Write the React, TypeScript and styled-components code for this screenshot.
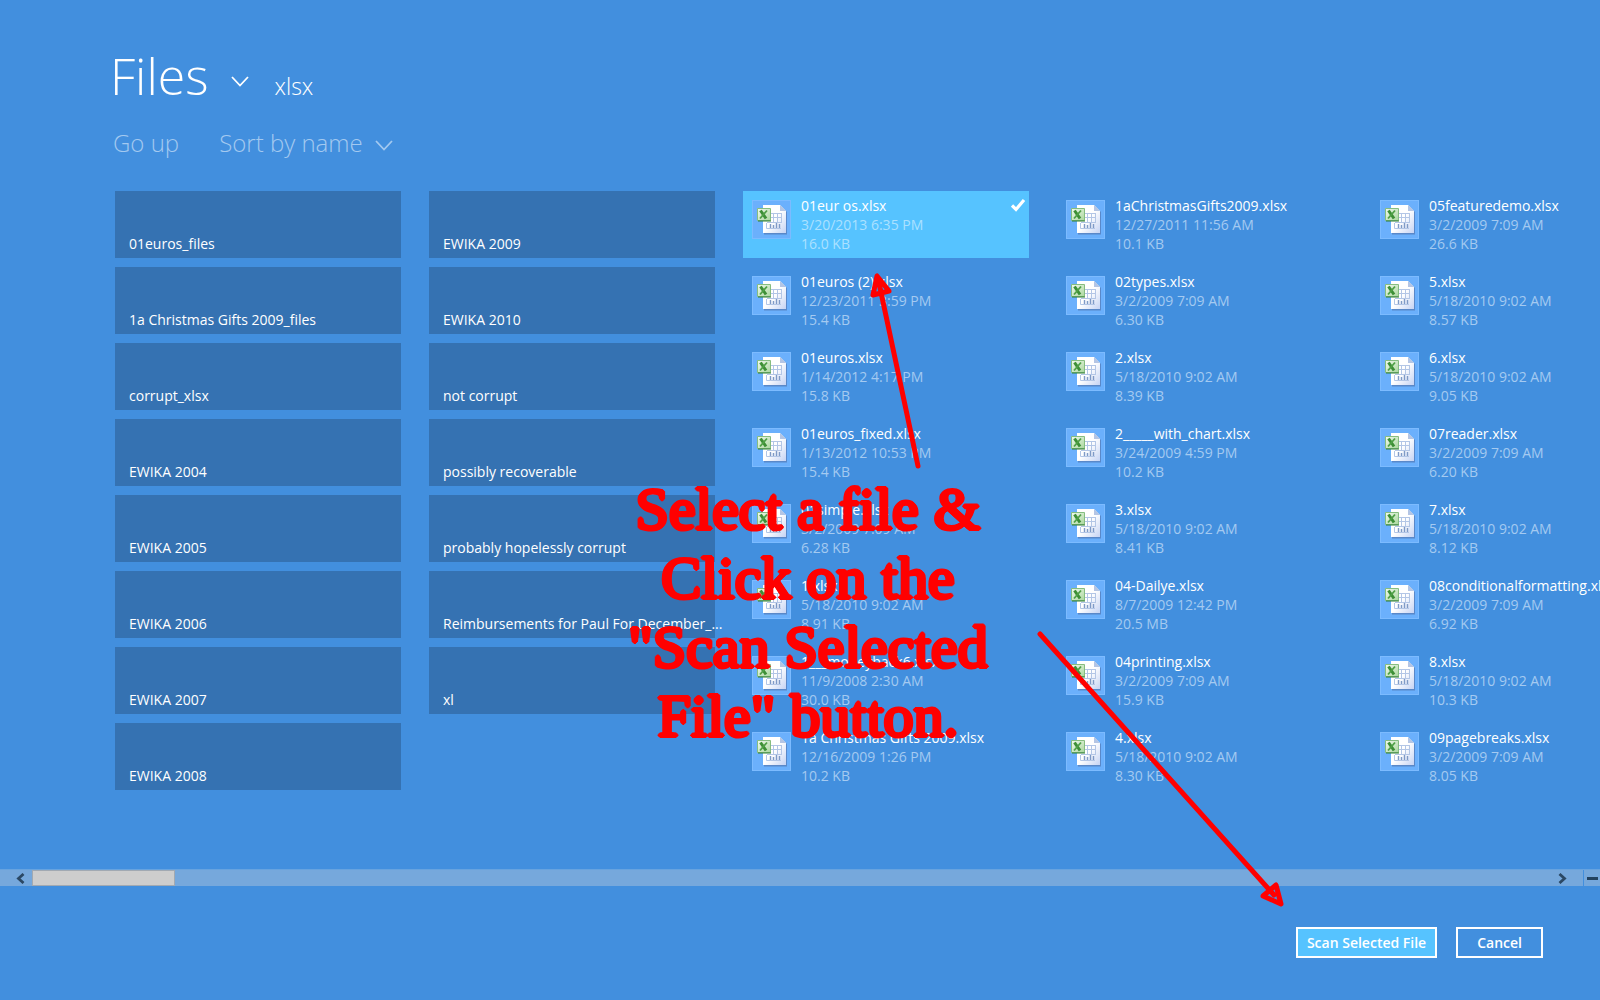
import React from 'react';
import styled, { createGlobalStyle } from 'styled-components';

const GlobalStyle = createGlobalStyle`
  * { box-sizing: border-box; }
  body {
    margin: 0;
    background: #428fde;
    color: #fff;
    font-family: "Open Sans", "Noto Sans", sans-serif;
    overflow: hidden;
  }
  button { font-family: inherit; color: inherit; cursor: pointer; }
`;

const Page = styled.div`
  position: relative;
  display: flex;
  flex-direction: column;
  min-height: 100vh;
  overflow: hidden;
`;

const Header = styled.header`
  display: flex;
  align-items: baseline;
  height: 64px;
  margin: 44px 0 0 110px;
`;

const LocationButton = styled.button`
  display: flex;
  align-items: center;
  gap: 22px;
  padding: 0;
  border: 0;
  background: none;
  svg { margin-top: 10px; }
`;

const Title = styled.h1`
  margin: 0;
  font-size: 50px;
  line-height: 64px;
  font-weight: 300;
`;

const Crumb = styled.span`
  margin-left: 26px;
  font-size: 23px;
  line-height: 32px;
  font-weight: 300;
`;

const Commands = styled.nav`
  display: flex;
  gap: 40px;
  margin: 18px 0 0 113px;
`;

const Command = styled.button`
  display: flex;
  align-items: center;
  gap: 12px;
  padding: 0;
  border: 0;
  background: none;
  font-size: 24px;
  line-height: 34px;
  font-weight: 300;
  && { color: #a3c9f0; }
  svg { margin-top: 4px; }
`;

const Browser = styled.main`
  flex: 1;
  padding: 31px 0 0 115px;
  overflow: hidden;
`;

const Grid = styled.div`
  display: grid;
  grid-auto-flow: column;
  grid-template-rows: repeat(8, 67px);
  grid-auto-columns: 286px;
  gap: 9px 28px;
`;

const Folder = styled.button`
  display: flex;
  align-items: flex-end;
  padding: 0 2px 5px 14px;
  border: 0;
  background: #3572b2;
  text-align: left;
  font-size: 14px;
  line-height: 19px;
  white-space: nowrap;
`;

const File = styled.button<{ $selected?: boolean }>`
  display: flex;
  align-items: flex-start;
  gap: 10px;
  padding: 5px 4px 5px 9px;
  border: 0;
  background: ${p => (p.$selected ? '#56c3ff' : 'transparent')};
  text-align: left;
  font-size: 14px;
  line-height: 19px;
`;

const Thumb = styled.span`
  flex: none;
  width: 39px;
  height: 39px;
  margin-top: 4px;
  border: 1px solid #7cbbff;
  background: #6bb0fc;
  svg { display: block; }
`;

const Details = styled.span`
  flex: 1;
  display: flex;
  flex-direction: column;
  white-space: nowrap;
`;

const Meta = styled.span<{ $selected?: boolean }>`
  color: ${p => (p.$selected ? '#abe1ff' : '#a4caf1')};
`;

const ScrollBar = styled.div`
  display: flex;
  align-items: stretch;
  height: 17px;
  border-top: 1px solid #67a3df;
  background: #76a8dc;
`;

const Arrow = styled.button`
  display: flex;
  align-items: center;
  justify-content: center;
  width: 32px;
  padding: 0 0 0 9px;
  border: 0;
  background: none;
`;

const Track = styled.div`
  flex: 1;
`;

const Handle = styled.div`
  width: 143px;
  height: 16px;
  border: 1px solid #a1a9b2;
  background: #cdcdcd;
`;

const NextArrow = styled(Arrow)`
  width: 42px;
  padding: 0;
`;

const ZoomOut = styled(Arrow)`
  width: 17px;
  padding: 0;
  border-left: 1px solid #428fde;
`;

const Footer = styled.footer`
  display: flex;
  justify-content: flex-end;
  gap: 19px;
  height: 114px;
  padding: 41px 57px 0 0;
`;

const Action = styled.button<{ $primary?: boolean }>`
  height: 31px;
  padding: 0 ${p => (p.$primary ? 9 : 19)}px;
  border: 2px solid #fff;
  background: ${p => (p.$primary ? '#56c3ff' : 'transparent')};
  font-size: 14px;
  line-height: 19px;
  font-weight: 600;
`;

const Note = styled.p`
  position: absolute;
  left: 608px;
  top: 475px;
  width: 400px;
  margin: 0;
  color: #f00;
  -webkit-text-stroke: 2px #f00;
  text-shadow: 2px 0 #f00, -2px 0 #f00, 0 2px #f00, 0 -2px #f00,
    1px 1px #f00, -1px 1px #f00, 1px -1px #f00, -1px -1px #f00;
  text-align: center;
  font-family: "Liberation Serif", serif;
  font-size: 60px;
  line-height: 69px;
  white-space: pre;
  pointer-events: none;
`;

const Arrows = styled.svg`
  position: absolute;
  left: 0;
  top: 0;
  pointer-events: none;
`;

const folders = [
  '01euros_files', '1a Christmas Gifts 2009_files', 'corrupt_xlsx', 'EWIKA 2004',
  'EWIKA 2005', 'EWIKA 2006', 'EWIKA 2007', 'EWIKA 2008',
  'EWIKA 2009', 'EWIKA 2010', 'not corrupt', 'possibly recoverable',
  'probably hopelessly corrupt', 'Reimbursements for Paul For December_...', 'xl',
];

const files = [
  ['01eur os.xlsx', '3/20/2013 6:35 PM', '16.0 KB'],
  ['01euros (2).xlsx', '12/23/2011 3:59 PM', '15.4 KB'],
  ['01euros.xlsx', '1/14/2012 4:17 PM', '15.8 KB'],
  ['01euros_fixed.xlsx', '1/13/2012 10:53 PM', '15.4 KB'],
  ['01simple.xlsx', '3/2/2009 7:09 AM', '6.28 KB'],
  ['1.xlsx', '5/18/2010 9:02 AM', '8.91 KB'],
  ['1___moneyback6.xlsx', '11/9/2008 2:30 AM', '30.0 KB'],
  ['1a Christmas Gifts 2009.xlsx', '12/16/2009 1:26 PM', '10.2 KB'],
  ['1aChristmasGifts2009.xlsx', '12/27/2011 11:56 AM', '10.1 KB'],
  ['02types.xlsx', '3/2/2009 7:09 AM', '6.30 KB'],
  ['2.xlsx', '5/18/2010 9:02 AM', '8.39 KB'],
  ['2_____with_chart.xlsx', '3/24/2009 4:59 PM', '10.2 KB'],
  ['3.xlsx', '5/18/2010 9:02 AM', '8.41 KB'],
  ['04-Dailye.xlsx', '8/7/2009 12:42 PM', '20.5 MB'],
  ['04printing.xlsx', '3/2/2009 7:09 AM', '15.9 KB'],
  ['4.xlsx', '5/18/2010 9:02 AM', '8.30 KB'],
  ['05featuredemo.xlsx', '3/2/2009 7:09 AM', '26.6 KB'],
  ['5.xlsx', '5/18/2010 9:02 AM', '8.57 KB'],
  ['6.xlsx', '5/18/2010 9:02 AM', '9.05 KB'],
  ['07reader.xlsx', '3/2/2009 7:09 AM', '6.20 KB'],
  ['7.xlsx', '5/18/2010 9:02 AM', '8.12 KB'],
  ['08conditionalformatting.xlsx', '3/2/2009 7:09 AM', '6.92 KB'],
  ['8.xlsx', '5/18/2010 9:02 AM', '10.3 KB'],
  ['09pagebreaks.xlsx', '3/2/2009 7:09 AM', '8.05 KB'],
];

const Chevron = () => (
  <svg width="18" height="11" viewBox="0 0 18 11" fill="none" stroke="currentColor" strokeWidth="1.8">
    <path d="M1 1 9 9.5 17 1" />
  </svg>
);

const SheetIcon = () => (
  <svg width="37" height="37" viewBox="0 0 37 37" fill="none">
    <defs>
      <linearGradient id="paper" x1="0" y1="0" x2="1" y2="1">
        <stop offset="0.5" stopColor="#fff" />
        <stop offset="1" stopColor="#c5d3f3" />
      </linearGradient>
      <linearGradient id="badge" x1="0" y1="0" x2="1" y2="1">
        <stop offset="0" stopColor="#f3faf0" />
        <stop offset="1" stopColor="#a9d79c" />
      </linearGradient>
    </defs>
    <path d="M11 5H28L34 11V33.5H11Z" fill="#4d6ea6" opacity=".6" />
    <path d="M10 4H27L33 10V32H10Z" fill="url(#paper)" />
    <path d="M27 4V10H33Z" fill="#b4c5e4" />
    <path d="M18 12.5H29M18 16.5H29M14 21.5H29M20.5 12V22M24.5 12V22M28.5 12V22M13.5 22V27.5H28" stroke="#b3c6e6" />
    <path d="M17.5 23V27M20.5 24V27M23.5 22V27M26.5 23V27" stroke="#7f9ac6" strokeWidth="1.4" />
    <path d="M4.5 7.5H17.5V19.5H4.5Z" fill="url(#badge)" stroke="#86bd80" />
    <path d="M5 20H18" stroke="#2f7d35" />
    <path d="M7.5 9.5 13 17.5" stroke="#3d8f36" strokeWidth="3" />
    <path d="M14 9.5 7 17.5" stroke="#4fa046" strokeWidth="1.8" />
  </svg>
);

const Check = () => (
  <svg width="14" height="14" viewBox="0 0 14 14" fill="none" stroke="#fff" strokeWidth="3.2">
    <path d="M1 7.5 5 11.5 13 2" />
  </svg>
);

const CheckSlot = styled.span`
  display: flex;
  padding-top: 2px;
`;

export default function App() {
  return (
    <Page>
      <GlobalStyle />
      <Header>
        <LocationButton aria-label="Files">
          <Title>Files</Title>
          <Chevron />
        </LocationButton>
        <Crumb>xlsx</Crumb>
      </Header>
      <Commands>
        <Command>Go up</Command>
        <Command>Sort by name <Chevron /></Command>
      </Commands>
      <Browser>
        <Grid>
          {folders.map(name => (
            <Folder key={name}>{name}</Folder>
          ))}
          <span />
          {files.map(([name, date, size], i) => (
            <File key={name} $selected={i === 0} aria-pressed={i === 0}>
              <Thumb><SheetIcon /></Thumb>
              <Details>
                <span>{name}</span>
                <Meta $selected={i === 0}>{date}</Meta>
                <Meta $selected={i === 0}>{size}</Meta>
              </Details>
              {i === 0 && <CheckSlot><Check /></CheckSlot>}
            </File>
          ))}
        </Grid>
      </Browser>
      <ScrollBar>
        <Arrow aria-label="Scroll left">
          <svg width="9" height="11" viewBox="0 0 9 11" fill="none" stroke="#2b4864" strokeWidth="2.8"><path d="M7.5 1 2.5 5.5 7.5 10" /></svg>
        </Arrow>
        <Track><Handle /></Track>
        <NextArrow aria-label="Scroll right">
          <svg width="9" height="11" viewBox="0 0 9 11" fill="none" stroke="#2b4864" strokeWidth="2.8"><path d="M1.5 1 6.5 5.5 1.5 10" /></svg>
        </NextArrow>
        <ZoomOut aria-label="Zoom out">
          <svg width="11" height="3" viewBox="0 0 11 3"><path d="M0 0H11V3H0Z" fill="#23425f" /></svg>
        </ZoomOut>
      </ScrollBar>
      <Footer>
        <Action $primary>Scan Selected File</Action>
        <Action>Cancel</Action>
      </Footer>
      <Note>{'Select a file &\nClick on the\n"Scan Selected\nFile" button.'}</Note>
      <Arrows width="1600" height="1000" viewBox="0 0 1600 1000" fill="none" stroke="#f00" strokeWidth="5" strokeLinecap="round" strokeLinejoin="round">
        <path d="M918 466 879 283M877 276 873 295 889 291Z" />
        <path d="M1040 634 1274 895M1281 904 1263 896 1276 885Z" />
      </Arrows>
    </Page>
  );
}
